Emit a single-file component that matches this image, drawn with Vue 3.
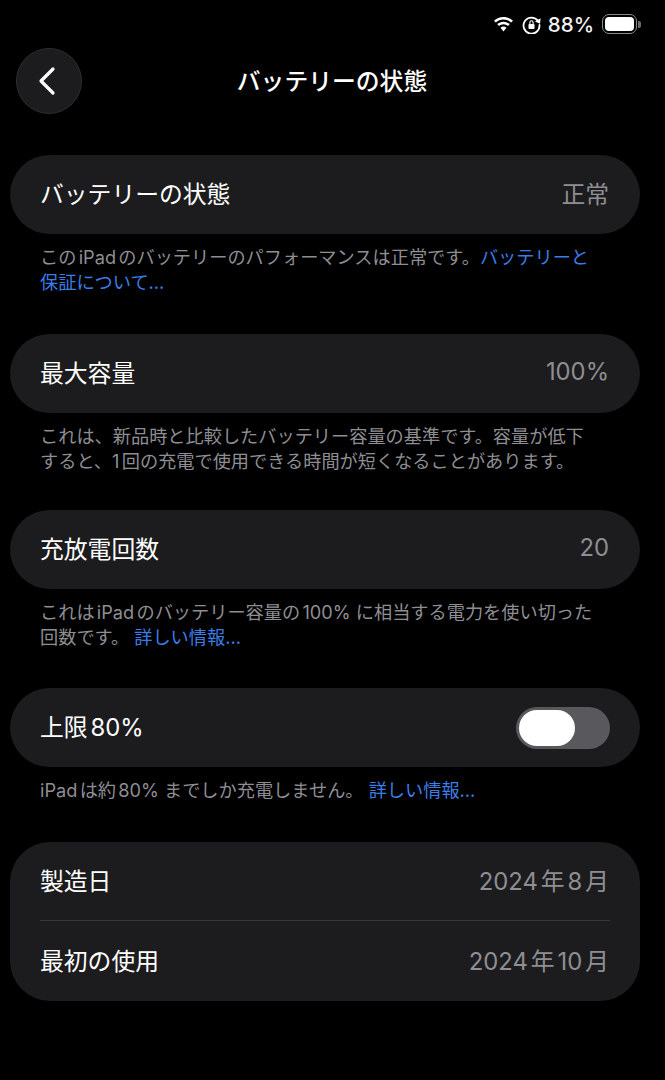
<template>
  <div class="page">
    <div class="status-bar">
      <svg class="wifi" viewBox="0 0 21 15" fill="#fff">
        <path d="M10.500 2.500c3 0 5.700 1.200 7.700 3.100L20 3.700C17.500 1.400 14.200 0 10.500 0S3.500 1.400 1 3.700l1.800 1.900c2-1.900 4.700-3.100 7.700-3.100z" />
        <path d="M10.500 7.200c1.700 0 3.300.7 4.500 1.800l1.800-1.900c-1.700-1.500-3.900-2.400-6.300-2.400s-4.600.9-6.300 2.400L6 9c1.200-1.100 2.800-1.800 4.500-1.800z" />
        <path d="M10.500 9.500c-1.100 0-2.200.4-3 1.200l3 3.800 3-3.800c-.8-.8-1.900-1.200-3-1.200z" />
      </svg>
      <svg class="rotation" viewBox="0 0 20 20" fill="none">
        <path d="M16.800 6.200A8.400 8.400 0 1 0 18.400 10.500" stroke="#fff" stroke-width="1.900" stroke-linecap="round" />
        <path d="M19.600 3.300 19 9.200l-5.400-2.300z" fill="#fff" />
        <rect x="6.800" y="9.400" width="6.400" height="5.400" rx="1" fill="#fff" />
        <path d="M8.300 9.400V7.800a1.700 1.700 0 0 1 3.400 0v1.600" stroke="#fff" stroke-width="1.200" />
      </svg>
      <span class="percent">88%</span>
      <div class="battery">
        <div class="battery-fill"></div>
      </div>
      <div class="battery-cap"></div>
    </div>

    <header class="header">
      <button class="back">
        <svg viewBox="0 0 20 30" fill="none">
          <path d="M16 3 4 15l12 12" stroke="#fff" stroke-width="3.200" stroke-linecap="round" stroke-linejoin="round" />
        </svg>
      </button>
      <h1 class="title">バッテリーの状態</h1>
    </header>

    <section class="section first">
      <div class="card">
        <div class="row">
          <span class="label">バッテリーの状態</span>
          <span class="value">正常</span>
        </div>
      </div>
      <div class="note">
        <p>このiPadのバッテリーのパフォーマンスは正常です。<a class="link">バッテリーと</a></p>
        <p><a class="link">保証について...</a></p>
      </div>
    </section>

    <section class="section second">
      <div class="card">
        <div class="row">
          <span class="label">最大容量</span>
          <span class="value">100%</span>
        </div>
      </div>
      <div class="note">
        <p>これは、新品時と比較したバッテリー容量の基準です。容量が低下</p>
        <p>すると、1回の充電で使用できる時間が短くなることがあります。</p>
      </div>
    </section>

    <section class="section third">
      <div class="card">
        <div class="row">
          <span class="label">充放電回数</span>
          <span class="value">20</span>
        </div>
      </div>
      <div class="note">
        <p>これはiPadのバッテリー容量の100% に相当する電力を使い切った</p>
        <p>回数です。 <a class="link">詳しい情報...</a></p>
      </div>
    </section>

    <section class="section fourth">
      <div class="card">
        <div class="row">
          <span class="label">上限80%</span>
          <div class="switch">
            <div class="knob"></div>
          </div>
        </div>
      </div>
      <div class="note">
        <p>iPadは約80% までしか充電しません。 <a class="link">詳しい情報...</a></p>
      </div>
    </section>

    <section class="section">
      <div class="card">
        <div class="row">
          <span class="label">製造日</span>
          <span class="value">2024年8月</span>
        </div>
        <div class="divider"></div>
        <div class="row">
          <span class="label">最初の使用</span>
          <span class="value">2024年10月</span>
        </div>
      </div>
    </section>
  </div>
</template>

<script setup>
</script>

<style>
html,
body {
  background: #000;
}
</style>

<style scoped>
.page {
  width: 665px;
  height: 1080px;
  overflow: hidden;
  background: #000;
  color: #fff;
  font-family: "Inter", "Noto Sans CJK JP", sans-serif;
  text-autospace: normal;
}

.status-bar {
  display: flex;
  align-items: center;
  justify-content: flex-end;
  height: 24px;
  padding: 12px 24px 0 0;
}

.wifi {
  width: 21px;
  height: 15px;
  margin-right: 8px;
}

.rotation {
  width: 19px;
  height: 19px;
  margin-right: 7px;
}

.percent {
  font-size: 20.5px;
  font-weight: 500;
  margin-right: 8px;
  color: #f2f2f2;
}

.battery {
  width: 35px;
  height: 20px;
  padding: 2px;
  box-sizing: border-box;
  border: 1.5px solid #8a8a8a;
  border-radius: 7px;
}

.battery-fill {
  height: 100%;
  width: 100%;
  background: #fff;
  border-radius: 4px;
}

.battery-cap {
  width: 3px;
  height: 7px;
  margin-left: 1px;
  background: #6a6a6a;
  border-radius: 0 2px 2px 0;
}

.header {
  position: relative;
  display: flex;
  align-items: center;
  justify-content: center;
  height: 66px;
  margin-top: 12px;
  margin-bottom: 41px;
}

.back {
  position: absolute;
  left: 16px;
  top: 0;
  width: 66px;
  height: 66px;
  padding: 0 5px 0 0;
  display: flex;
  align-items: center;
  justify-content: center;
  background: #1c1c1e;
  border: 1px solid #2e2e30;
  border-radius: 50%;
}

.back svg {
  width: 20px;
  height: 30px;
}

.title {
  margin: 0;
  padding: 0 1px 3px 0;
  font-size: 23.8px;
  font-weight: 500;
}

.section {
  margin: 0 25px 0 10px;
}

.first {
  margin-bottom: 39px;
}

.second {
  margin-bottom: 36px;
}

.third {
  margin-bottom: 38px;
}

.fourth {
  margin-bottom: 39px;
}

.card {
  background: #1c1c1e;
  border-radius: 40px;
  padding: 0 30px;
}

.row {
  display: flex;
  align-items: center;
  justify-content: space-between;
  height: 79px;
}

.label {
  padding-bottom: 4px;
  font-size: 23.8px;
  color: #fff;
}

.value {
  padding: 0 1px 4px 0;
  font-size: 23.8px;
  color: #8e8e93;
}

.divider {
  height: 1px;
  background: #38383a;
  margin-top: -1px;
  margin-bottom: 1px;
}

.note {
  margin-top: 11px;
  padding: 0 30px;
  font-size: 18.2px;
  line-height: 25px;
  color: #8e8e93;
}

.note p {
  margin: 0;
  white-space: nowrap;
}

.link {
  color: #3b7de8;
}

.switch {
  display: flex;
  align-items: center;
  width: 94px;
  height: 42px;
  box-sizing: border-box;
  padding: 2px;
  background: #58585d;
  border-radius: 21px;
}

.knob {
  width: 56px;
  height: 36px;
  margin-left: 1px;
  background: #fff;
  border-radius: 18px;
}
</style>
